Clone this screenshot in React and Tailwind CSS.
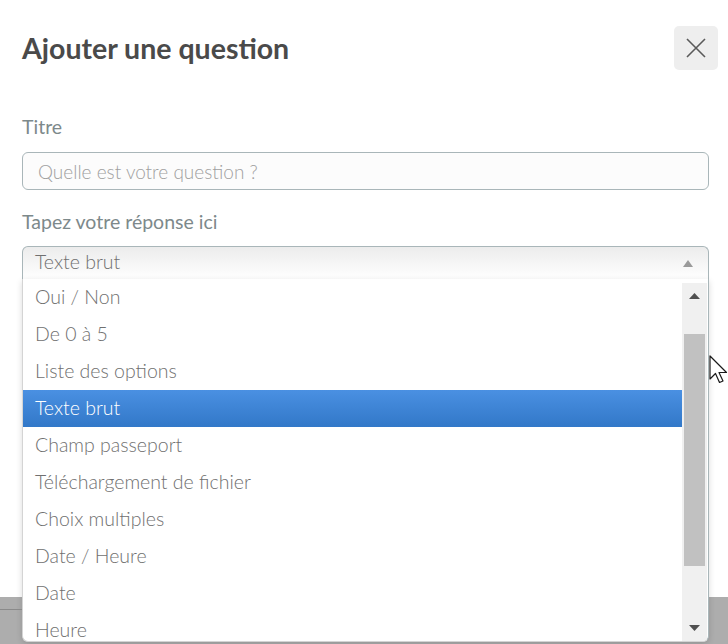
import { useState } from "react";

const OPTIONS = [
  "Oui / Non",
  "De 0 à 5",
  "Liste des options",
  "Texte brut",
  "Champ passeport",
  "Téléchargement de fichier",
  "Choix multiples",
  "Date / Heure",
  "Date",
  "Heure",
];

function Cursor() {
  return (
    <svg className="absolute left-[709px] top-[355px]" width="20" height="30" viewBox="0 0 20 30">
      <path d="M1 1 L1 24 L6.5 18.5 L10.5 27.5 L14 26 L10 17.5 L17.5 17.5 Z" fill="#fff" stroke="#1a1a1a" strokeWidth="1.2" strokeLinejoin="round" />
    </svg>
  );
}

export default function App() {
  const [selected] = useState("Texte brut");

  return (
    <div className="relative h-[644px] w-[728px] overflow-hidden bg-[#adadad] font-['Lato',sans-serif]">
      <div className="flex h-[597px] flex-col bg-white pl-[22px] pr-[19px] pt-[26px]">
        {/* header */}
        <div className="mr-[-9px] flex h-[44px] items-center justify-between">
          <h1 className="text-[28.5px] font-bold leading-none text-[#4a4a4a]">Ajouter une question</h1>
          <button className="flex h-[44px] w-[44px] items-center justify-center rounded-[5px] bg-[#eeeeee]">
            <svg width="22" height="22" viewBox="0 0 22 22">
              <path d="M2 2 L20 20 M20 2 L2 20" stroke="#5a5a5a" strokeWidth="1.6" />
            </svg>
          </button>
        </div>

        <label className="mt-[45px] block text-[19.5px] leading-[24px] text-[#7d898b]">Titre</label>
        <input
          className="mt-[13px] block h-[38px] w-full rounded-[6px] border border-[#a9b6b9] bg-[#fcfcfc] px-[15px] text-[19px] font-light text-[#555] outline-none placeholder:text-[#a0a0a0]"
          placeholder="Quelle est votre question ?"
        />

        <label className="mt-[20px] block text-[19.5px] leading-[24px] text-[#7d898b]">Tapez votre réponse ici</label>

        <div className="relative mt-[12px]">
          <div className="flex h-[33px] items-center justify-between rounded-t-[6px] border border-b-0 border-[#a9b6b9] bg-gradient-to-b from-[#ececec] to-white pl-[12px] pr-[15px] text-[19.5px] font-light text-[#707070]">
            <span className="-mt-[2px]">{selected}</span>
            <svg width="10" height="7" viewBox="0 0 10 7">
              <path d="M0 7 L5 0 L10 7 Z" fill="#9a9a9a" />
            </svg>
          </div>

          {/* open list */}
          <div className="absolute left-0 top-[33px] flex h-[363px] w-full overflow-hidden rounded-b-[6px] border-x border-b border-b-[#d4d4d4] border-l-[#d4d4d4] border-r-[#a9b6b9] bg-white shadow-[0_2px_6px_rgba(0,0,0,0.15)]">
            <ul className="flex-1">
              {OPTIONS.map((o) =>
                o === selected ? (
                  <li
                    key={o}
                    className="flex h-[37px] items-center bg-gradient-to-b from-[#4a90e2] to-[#3278c8] pb-[2px] pl-[12px] text-[19.5px] font-light text-white"
                  >
                    {o}
                  </li>
                ) : (
                  <li key={o} className="flex h-[37px] items-center pb-[2px] pl-[12px] text-[19.5px] font-light text-[#707070]">
                    {o}
                  </li>
                )
              )}
            </ul>

            {/* scrollbar */}
            <div className="mr-[1px] mt-[4px] flex w-[25px] flex-col items-center bg-[#f0f0f0] px-[2px] pb-[10px] pt-[10px]">
              <svg width="11" height="6" viewBox="0 0 11 6">
                <path d="M0 6 L5.5 0 L11 6 Z" fill="#505050" />
              </svg>
              <div className="mt-[35px] h-[232px] w-full bg-[#c1c1c1]" />
              <div className="flex-1" />
              <svg width="11" height="6" viewBox="0 0 11 6">
                <path d="M0 0 L5.5 6 L11 0 Z" fill="#505050" />
              </svg>
            </div>
          </div>
        </div>
      </div>

      <div className="absolute left-0 top-[609px] h-px w-[22px] bg-[#8a8a8a]" />
      <Cursor />
    </div>
  );
}
